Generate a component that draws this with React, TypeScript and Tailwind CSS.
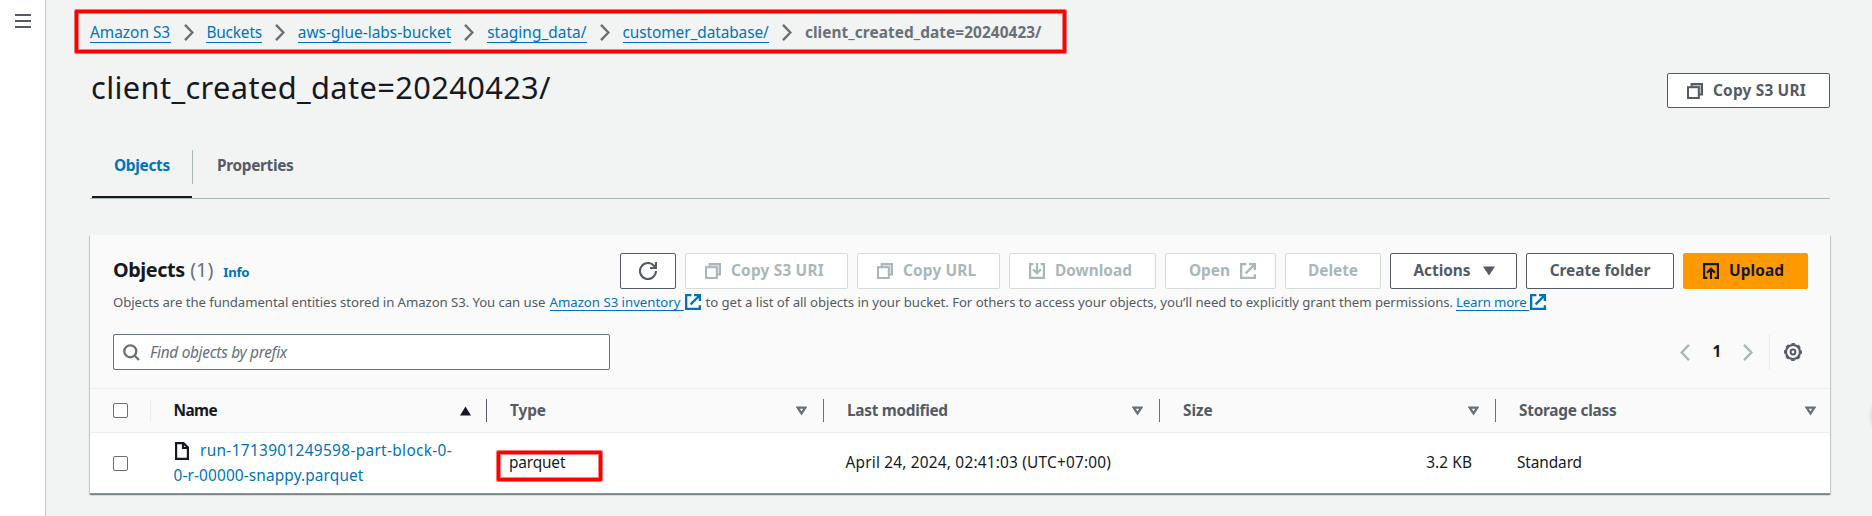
import type { ReactNode } from 'react';

const Copy = () => (
  <svg width="16" height="16" viewBox="0 0 16 16" fill="none" stroke="currentColor" strokeWidth="2" className="shrink-0">
    <path d="M4.6 4.2V1H15v10.4h-3" fill="currentColor" fillOpacity=".42" />
    <rect x="1" y="4.2" width="10.8" height="10.8" className="fill-white" />
  </svg>
);

const External = ({ className = '' }: { className?: string }) => (
  <svg width="16" height="16" viewBox="0 0 16 16" fill="none" stroke="currentColor" strokeWidth="2.3" className={`shrink-0 ${className}`}>
    <path d="M6.4 1.15H1.15v13.7h13.7v-3.6M9 1.15h5.85V7M15 1 5.6 10.4" />
  </svg>
);

const Download = () => (
  <svg width="16" height="16" viewBox="0 0 16 16" fill="none" stroke="currentColor" strokeWidth="2.2" className="shrink-0">
    <path d="M4.4 1.1H1.1v13.8h13.8V1.1h-3.3M8 0v10M4 6.2l4 4 4-4" />
  </svg>
);

const UploadIcon = () => (
  <svg width="16" height="16" viewBox="0 0 16 16" fill="none" stroke="currentColor" strokeWidth="2.2" className="shrink-0">
    <path d="M4.4 14.9H1.1V1.1h13.8v13.8h-3.3M8 16V6M4 9.8l4-4 4 4" />
  </svg>
);

const Refresh = () => (
  <svg width="18" height="18" viewBox="0 0 18 18" fill="none" stroke="currentColor" strokeWidth="2.1">
    <path d="M17 9a8 8 0 1 1-2-5.3l2 2.3M17 0v6h-6" />
  </svg>
);

const Chevron = ({ left = false, className = '' }: { left?: boolean; className?: string }) => (
  <svg width="10" height="17" viewBox="0 0 10 17" fill="none" stroke="currentColor" strokeWidth="2.4" className={className}>
    <path d={left ? 'M9 .8 1.6 8.5 9 16.2' : 'M1 .8 8.4 8.5 1 16.2'} />
  </svg>
);

const Gear = () => (
  <svg width="18" height="18" viewBox="0 0 18 18" fill="none" stroke="currentColor">
    <circle cx="9" cy="9" r="7" strokeWidth="2.2" />
    <circle cx="9" cy="9" r="8.2" strokeWidth="1.6" strokeDasharray="3.6 2.84" strokeDashoffset="1.8" />
    <circle cx="9" cy="9" r="2.4" strokeWidth="2" />
  </svg>
);

const SortDown = () => (
  <svg width="11" height="10" viewBox="0 0 11 10" fill="none" stroke="#687078" strokeWidth="2.2">
    <path d="M1.7 1.7h7.6L5.5 7.4z" />
  </svg>
);

const Button = ({ children, className }: { children?: ReactNode; className: string }) => (
  <button className={`flex shrink-0 items-center rounded-[2px] border text-[15.4px] font-bold whitespace-nowrap ${className}`}>
    {children}
  </button>
);

const normal = 'border-[#545b64] bg-white text-[#545b64]';
const disabled = 'border-[#d5dbdb] bg-white text-[#aab7b8]';

const crumbs = [
  { label: 'Amazon S3', width: 'w-[80.5px]', track: 'tracking-normal' },
  { label: 'Buckets', width: 'w-[55.5px]', track: 'tracking-[-0.16px]' },
  { label: 'aws-glue-labs-bucket', width: 'w-[153.5px]', track: 'tracking-[0.03px]' },
  { label: 'staging_data/', width: 'w-[99.5px]', track: 'tracking-[0.04px]' },
  { label: 'customer_database/', width: 'w-[146.5px]', track: 'tracking-[-0.08px]' },
];

const HeaderCell = ({ label, track, last = false }: { label: string; track: string; last?: boolean }) => (
  <div className={`flex h-[23px] items-center justify-between pl-[23px] ${last ? 'pr-[14px]' : 'border-r border-[#687078] pr-[16px]'}`}>
    <span className={track}>{label}</span>
    <SortDown />
  </div>
);

const Checkbox = () => <span className="block size-[15px] rounded-[2px] border border-[#687078] bg-white" />;

export default function App() {
  return (
    <div className="relative flex h-[516px] w-[1872px] overflow-hidden bg-[#f2f3f3] font-['Noto_Sans',sans-serif] text-[15.4px] leading-[22px] text-[#16191f]">
      <aside className="w-[46px] shrink-0 border-r border-[#c6cacb] bg-white pt-[14px] pl-[15px]">
        <div className="flex w-[16px] flex-col gap-[4px]">
          <span className="h-[2px] bg-[#545b64]" />
          <span className="h-[2px] bg-[#545b64]" />
          <span className="h-[2px] bg-[#545b64]" />
        </div>
      </aside>

      <main className="w-[1784px] shrink-0 pl-[44px]">
        <nav className="flex h-[54px] items-center pt-[10px]">
          {crumbs.map((c) => (
            <span key={c.label} className="flex items-center">
              <a className={`block h-[22px] border-b border-[#0073bb] leading-[24px] whitespace-nowrap text-[#0073bb] ${c.width} ${c.track}`}>
                {c.label}
              </a>
              <Chevron className="mt-[1px] mr-[12.9px] ml-[13px] text-[#687078]" />
            </span>
          ))}
          <span className="mt-[1px] font-bold tracking-[0.07px] text-[#687078]">client_created_date=20240423/</span>
        </nav>

        <div className="flex h-[96px] justify-between">
          <h1 className="pt-[13px] pl-[1px] text-[30.8px] leading-[40px] tracking-[0.37px] whitespace-nowrap">client_created_date=20240423/</h1>
          <Button className={`mt-[19px] h-[35px] w-[163px] gap-[10px] pl-[19px] tracking-[0.2px] ${normal}`}>
            <Copy />
            Copy S3 URI
          </Button>
        </div>

        <div className="flex h-[49px] border-b border-[#aab7b8] font-bold">
          <div className="ml-[2px] flex h-[48px] w-[100px] flex-col border-b-2 border-[#16191f] text-[#0073bb]">
            <div className="mr-[-1px] flex h-[34px] items-center border-r border-[#aab7b8] pb-[2px] pl-[22px] tracking-[-0.3px]">Objects</div>
          </div>
          <div className="flex h-[34px] items-center pb-[2px] pl-[25px] tracking-[-0.33px] text-[#545b64]">Properties</div>
        </div>

        <section className="mt-[36px] h-[259px] border-b border-[#879596] bg-white shadow-[0_1px_1px_rgba(0,28,36,.3),1px_1px_1px_rgba(0,28,36,.15),-1px_1px_1px_rgba(0,28,36,.15)]">
          <div className="h-[154px] border-b border-[#eaeded] bg-[#fafafa] pr-[22px] pl-[23px]">
            <div className="flex items-start justify-between pt-[18px]">
              <div className="flex items-baseline pt-[3px]">
                <h2 className="text-[19.8px] leading-[27px] font-bold tracking-[-0.42px]">Objects</h2>
                <span className="ml-[5.5px] text-[19.8px] text-[#687078]">(1)</span>
                <a className="ml-[10px] text-[13.2px] font-bold tracking-[-0.3px] text-[#0073bb]">Info</a>
              </div>
              <div className="flex gap-[9px]">
                <Button className={`h-9 w-[56px] justify-center ${normal}`}>
                  <Refresh />
                </Button>
                <Button className={`h-9 w-[163px] gap-[10px] pl-[19px] tracking-[0.2px] ${disabled}`}>
                  <Copy />
                  Copy S3 URI
                </Button>
                <Button className={`h-9 w-[143px] gap-[10px] pl-[19px] tracking-[0.16px] ${disabled}`}>
                  <Copy />
                  Copy URL
                </Button>
                <Button className={`h-9 w-[147px] gap-[10px] pl-[19px] ${disabled}`}>
                  <Download />
                  Download
                </Button>
                <Button className={`h-9 w-[111px] justify-end gap-[10px] pr-[19px] ${disabled}`}>
                  Open
                  <External />
                </Button>
                <Button className={`h-9 w-[96px] justify-center ${disabled}`}>Delete</Button>
                <Button className={`h-9 w-[127px] justify-center gap-[12px] pl-[1px] ${normal}`}>
                  Actions
                  <svg width="12" height="10" viewBox="0 0 12 10" fill="currentColor">
                    <path d="M0 .5h12L6 9.5z" />
                  </svg>
                </Button>
                <Button className={`h-9 w-[148px] justify-center ${normal}`}>Create folder</Button>
                <Button className="h-9 w-[125px] gap-[10px] border-[#ff9900] bg-[#ff9900] pl-[19px] tracking-[0.08px] text-[#16191f]">
                  <UploadIcon />
                  Upload
                </Button>
              </div>
            </div>

            <p className="mt-[3px] flex h-[20px] items-center text-[13.2px] leading-[18px] whitespace-nowrap text-[#545b64]">
              <span className="w-[436.5px] tracking-[-0.07px]">Objects are the fundamental entities stored in Amazon S3. You can use</span>
              <a className="block h-[18px] w-[134.5px] border-b border-[#0073bb] text-[#0073bb]">Amazon S3 inventory</a>
              <External className="ml-[1px] text-[#0073bb]" />
              <span className="ml-[4.5px] w-[750.5px] tracking-[-0.05px]">
                to get a list of all objects in your bucket. For others to access your objects, you’ll need to explicitly grant them permissions.
              </span>
              <a className="block h-[18px] w-[73px] border-b border-[#0073bb] tracking-[-0.12px] text-[#0073bb]">Learn more</a>
              <External className="ml-[1px] text-[#0073bb]" />
            </p>

            <div className="mt-[22px] flex items-center justify-between">
              <div className="flex h-9 w-[497px] items-center rounded-[2px] border border-[#687078] bg-white pl-[9px] text-[#687078]">
                <svg width="17" height="17" viewBox="0 0 17 17" fill="none" stroke="currentColor" strokeWidth="2.3">
                  <circle cx="7.3" cy="7.3" r="6" />
                  <path d="m11.5 11.5 4.5 4.5" />
                </svg>
                <span className="mt-[1px] ml-[10px] tracking-[-0.3px] italic">Find objects by prefix</span>
              </div>
              <div className="flex h-9 items-center">
                <Chevron left className="text-[#aab7b8]" />
                <span className="w-[53px] pl-[1px] text-center font-bold">1</span>
                <Chevron className="text-[#aab7b8]" />
                <span className="ml-[16px] h-full border-l border-[#eaeded]" />
                <span className="mr-[6px] ml-[14px] text-[#545b64]">
                  <Gear />
                </span>
              </div>
            </div>
          </div>

          <div className="grid h-[44px] grid-cols-[61px_336px_337px_336px_336px_334px] items-center border-b border-[#eaeded] bg-[#fafafa] font-bold text-[#545b64]">
            <div className="flex h-[23px] items-center border-r border-[#eaeded] pl-[23px]">
              <Checkbox />
            </div>
            <div className="flex h-[23px] items-center justify-between border-r border-[#545b64] pr-[15px] pl-[22.5px] text-[#16191f]">
              <span className="tracking-[-0.6px]">Name</span>
              <svg width="11" height="10" viewBox="0 0 11 10" fill="currentColor">
                <path d="M0 9.5h11L5.5.5z" />
              </svg>
            </div>
            <HeaderCell label="Type" track="tracking-[-0.1px]" />
            <HeaderCell label="Last modified" track="tracking-[-0.3px]" />
            <HeaderCell label="Size" track="tracking-[-0.05px]" />
            <HeaderCell label="Storage class" track="tracking-[-0.25px]" last />
          </div>

          <div className="grid h-[60px] grid-cols-[61px_336px_337px_336px_336px_334px] items-center whitespace-nowrap">
            <div className="pl-[23px]">
              <Checkbox />
            </div>
            <div className="pb-[1px] pl-[22px] leading-[25px] text-[#0073bb]">
              <div className="flex items-center">
                <svg width="14" height="18" viewBox="0 0 14 18" fill="none" stroke="#16191f" strokeWidth="2.2" className="mt-[2px] ml-[1.5px]">
                  <path d="M1.1 1.1h7.4l4.4 4.4v11.4H1.1zM8 1v5h5" />
                </svg>
                <span className="ml-[11.5px] tracking-[0.33px]">run-1713901249598-part-block-0-</span>
              </div>
              <div className="pl-[.5px] tracking-[0.13px]">0-r-00000-snappy.parquet</div>
            </div>
            <div className="pl-[22px] tracking-[-0.15px]">parquet</div>
            <div className="pl-[21.5px] tracking-[0.2px]">April 24, 2024, 02:41:03 (UTC+07:00)</div>
            <div className="pr-[24px] text-right tracking-[0.1px]">3.2 KB</div>
            <div className="pl-[21px] tracking-[-0.1px]">Standard</div>
          </div>
        </section>
      </main>

      <div className="absolute top-[10px] left-[75px] h-[43px] w-[991px] rounded-[1px] border-3 border-[#ff0000] shadow-[0_0_0_1px_rgba(255,0,0,.55),inset_0_0_0_1px_rgba(255,0,0,.5)]" />
      <div className="absolute top-[451px] left-[497px] h-[30px] w-[105px] rounded-[1px] border-3 border-[#ff0000] shadow-[0_0_0_1px_rgba(255,0,0,.55),inset_0_0_0_1px_rgba(255,0,0,.5)]" />
      <div className="absolute top-[396px] left-[1872px] size-[40px] rounded-full shadow-[0_0_5px_rgba(0,28,36,.2)]" />
    </div>
  );
}
